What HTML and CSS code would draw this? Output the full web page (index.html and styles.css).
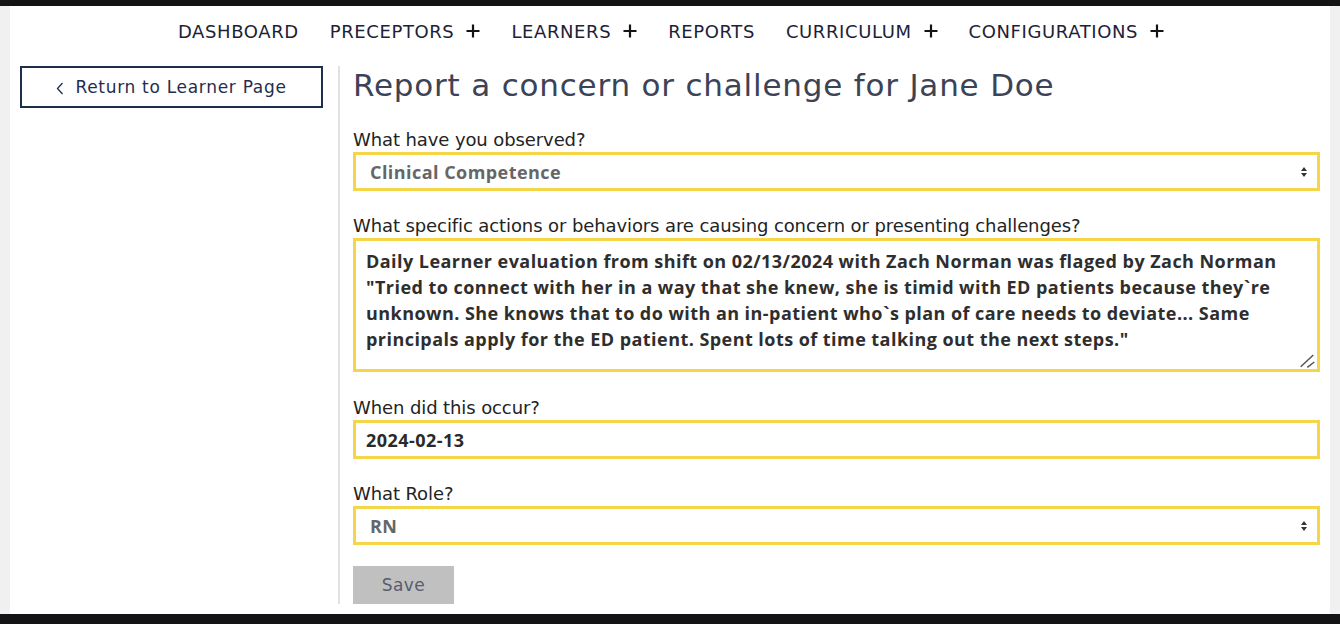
FILE: index.html
```html
<!DOCTYPE html>
<html lang="en">
<head>
<meta charset="utf-8">
<title>Report a concern</title>
<link rel="stylesheet" href="styles.css">
</head>
<body>
<div class="topbar"></div>
<div class="page">
  <nav class="nav">
    <a class="nav-item" href="#">DASHBOARD</a>
    <a class="nav-item" href="#">PRECEPTORS<svg class="plus" width="14" height="14" viewBox="0 0 14 14"><path d="M7 0.5 V13.5 M0.5 7 H13.5" stroke="#141414" stroke-width="2.2"/></svg></a>
    <a class="nav-item" href="#">LEARNERS<svg class="plus" width="14" height="14" viewBox="0 0 14 14"><path d="M7 0.5 V13.5 M0.5 7 H13.5" stroke="#141414" stroke-width="2.2"/></svg></a>
    <a class="nav-item" href="#">REPORTS</a>
    <a class="nav-item" href="#">CURRICULUM<svg class="plus" width="14" height="14" viewBox="0 0 14 14"><path d="M7 0.5 V13.5 M0.5 7 H13.5" stroke="#141414" stroke-width="2.2"/></svg></a>
    <a class="nav-item" href="#">CONFIGURATIONS<svg class="plus" width="14" height="14" viewBox="0 0 14 14"><path d="M7 0.5 V13.5 M0.5 7 H13.5" stroke="#141414" stroke-width="2.2"/></svg></a>
  </nav>
  <div class="main">
    <aside class="sidebar">
      <a class="back-btn" href="#"><svg class="chev" width="8" height="13" viewBox="0 0 8 13"><path d="M6.5 1 L1.5 6.5 L6.5 12" fill="none" stroke="#1f2d50" stroke-width="1.3"/></svg>Return to Learner Page</a>
    </aside>
    <section class="content">
      <h1 class="title">Report a concern or challenge for Jane Doe</h1>
      <div class="field">
        <label class="label">What have you observed?</label>
        <select class="control select"><option>Clinical Competence</option></select>
      </div>
      <div class="field field-text">
        <label class="label">What specific actions or behaviors are causing concern or presenting challenges?</label>
        <div class="textarea-wrap">
          <textarea class="control textarea">Daily Learner evaluation from shift on 02/13/2024 with Zach Norman was flaged by Zach Norman
"Tried to connect with her in a way that she knew, she is timid with ED patients because they`re
unknown. She knows that to do with an in-patient who`s plan of care needs to deviate... Same
principals apply for the ED patient. Spent lots of time talking out the next steps."</textarea>
          <svg class="grip" width="16" height="14" viewBox="0 0 16 14"><path d="M1.7 12.7 L14.3 1 M8.3 13.3 L15.3 8" stroke="#555" stroke-width="1.5" fill="none"/></svg>
        </div>
      </div>
      <div class="field">
        <label class="label">When did this occur?</label>
        <input class="control input" type="text" value="2024-02-13">
      </div>
      <div class="field">
        <label class="label">What Role?</label>
        <select class="control select"><option>RN</option></select>
      </div>
      <button class="save" type="button">Save</button>
    </section>
  </div>
</div>
<div class="footer"></div>
</body>
</html>
```
FILE: styles.css
```css
* { box-sizing: border-box; }
html, body { margin: 0; padding: 0; }
body {
  background: #f0f0f0;
  font-family: "DejaVu Sans", "Open Sans", sans-serif;
  color: #222;
}
.topbar { height: 6px; background: #131316; }
.page {
  margin: 0 10px;
  background: #fff;
  height: 608px;
  display: flex;
  flex-direction: column;
}
.nav {
  height: 50px;
  display: flex;
  justify-content: center;
  align-items: center;
  gap: 31px;
  padding-left: 2px;
}
.nav-item {
  color: #1c2236;
  text-decoration: none;
  font-size: 18px;
  letter-spacing: 0.6px;
  display: flex;
  align-items: center;
}
.plus {
  margin-left: 12px;
}
.main {
  display: flex;
  padding-top: 10px;
  flex: 1;
}
.sidebar {
  width: 328px;
  padding: 0 15px 0 10px;
  flex: none;
}
.back-btn {
  display: flex;
  align-items: center;
  justify-content: center;
  gap: 11px;
  width: 303px;
  height: 42px;
  border: 2px solid #1f2d50;
  color: #1f2d50;
  text-decoration: none;
  font-size: 17px;
  letter-spacing: 0.7px;
}
.chev { margin-top: 2px; }
.content {
  flex: 1;
  border-left: 2px solid #e2e2e2;
  padding: 0 10px 0 13px;
  height: 538px;
}
.title {
  margin: 0 0 24px;
  font-weight: 400;
  font-size: 31px;
  line-height: 38px;
  color: #3c4356;
  letter-spacing: 0.8px;
}
.field { margin-bottom: 23px; }
.field-text { margin-bottom: 24px; }
.label {
  display: block;
  font-size: 18px;
  line-height: 24px;
  color: #232323;
  letter-spacing: -0.1px;
}
.control {
  display: block;
  width: 100%;
  border: 3px solid #f6d649;
  border-radius: 0;
  background: #fff;
  font-family: "Open Sans", "DejaVu Sans", sans-serif;
  font-weight: 700;
  font-size: 18px;
  letter-spacing: 0.45px;
  outline: none;
  margin: 0;
}
.select {
  appearance: none;
  -webkit-appearance: none;
  height: 39px;
  padding: 0 30px 0 14px;
  color: #666;
  background-image: url("data:image/svg+xml;utf8,<svg xmlns='http://www.w3.org/2000/svg' width='8' height='12' viewBox='0 0 8 12'><path d='M4 1 L7 5 L1 5 Z M4 11 L7 7 L1 7 Z' fill='%23333'/></svg>");
  background-repeat: no-repeat;
  background-position: right 9px center;
}
.textarea-wrap { position: relative; }
.textarea {
  height: 134px;
  padding: 7px 10px;
  line-height: 26px;
  color: #2e2e2e;
  resize: none;
  overflow: hidden;
}
.grip {
  position: absolute;
  right: 5px;
  bottom: 4px;
  pointer-events: none;
}
.input {
  height: 39px;
  padding: 0 10px;
  color: #2a2a2a;
}
.save {
  display: block;
  width: 101px;
  height: 38px;
  margin-top: -2px;
  border: none;
  background: #c0c0c0;
  color: #575d6e;
  font-family: inherit;
  font-size: 17px;
  letter-spacing: 0.4px;
}
.footer { height: 10px; background: #131316; }
```
